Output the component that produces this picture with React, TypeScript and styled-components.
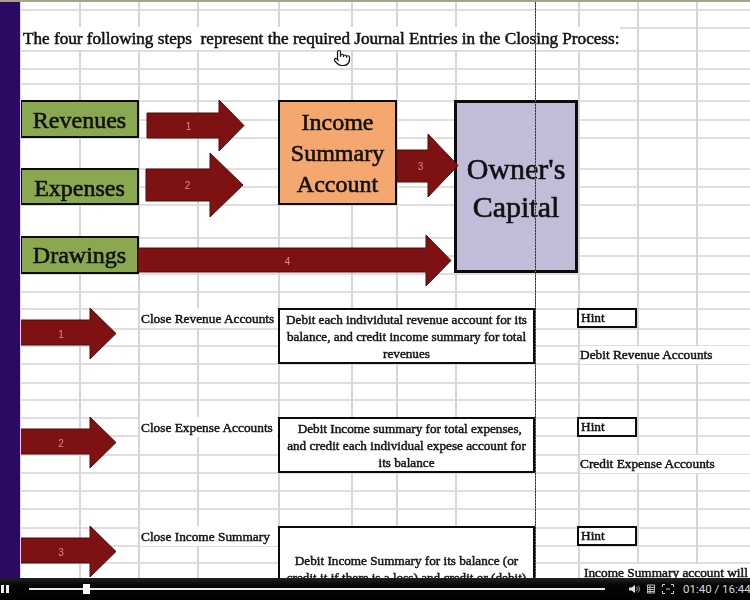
import React from 'react';
import styled, { createGlobalStyle } from 'styled-components';
import { Pointer } from 'lucide-react';

const COLUMNS = [59, 118, 177, 258, 331, 376, 435, 558, 617, 676];
const ROWS = [7, 25, 48, 66, 81, 98, 117, 135, 166, 184, 202, 235, 253, 271, 289, 306, 326, 343, 361, 380, 397, 415, 433, 452, 470, 488, 506, 525, 543, 560];

const gridLines = [
  ...COLUMNS.map((x) => `linear-gradient(#d6d6d6, #d6d6d6) ${x}px 0 / 2px 100% no-repeat`),
  ...ROWS.map((y) => `linear-gradient(#dfdfdf, #dfdfdf) 0 ${y}px / 100% 2px no-repeat`),
].join(', ');

const GlobalStyle = createGlobalStyle`
  html, body {
    margin: 0;
    padding: 0;
    background: #000;
  }
`;

const Frame = styled.div`
  width: 750px;
  height: 600px;
  display: flex;
  flex-direction: column;
  overflow: hidden;
  font-family: 'Liberation Serif', serif;
  color: #111;
`;

const Screen = styled.div`
  flex: 1;
  min-height: 0;
  display: flex;
  border-top: 2px solid #a8a48c;
`;

const Sidebar = styled.div`
  position: relative;
  z-index: 1;
  width: 20px;
  flex: none;
  background: #2a0a62;
  box-shadow: 1px 0 0 #ecd2f2;
`;

const Sheet = styled.div`
  flex: 1;
  position: relative;
  overflow: hidden;
  background: ${gridLines}, #fff;
`;

const Title = styled.div`
  margin: 25px 130px 0 0;
  height: 23px;
  padding-left: 3px;
  background: #fff;
  font-size: 17.15px;
  line-height: 24px;
  white-space: pre;
  -webkit-text-stroke: 0.5px #111;
  filter: blur(0.3px);
`;

const Diagram = styled.div`
  position: relative;
  height: 208px;
  margin-top: 50px;
`;

const Node = styled.div<{ $x: number; $y: number; $w: number; $h: number; $bg: string; $size: number; $line: number; $border: number; $lift: number }>`
  position: absolute;
  left: ${(p) => p.$x}px;
  top: ${(p) => p.$y}px;
  width: ${(p) => p.$w}px;
  height: ${(p) => p.$h}px;
  box-sizing: border-box;
  padding-top: ${(p) => p.$lift}px;
  display: flex;
  align-items: center;
  justify-content: center;
  text-align: center;
  background: ${(p) => p.$bg};
  border: ${(p) => p.$border}px solid #0c0c0c;
  font-size: ${(p) => p.$size}px;
  line-height: ${(p) => p.$line}px;
  -webkit-text-stroke: 0.6px #111;
  filter: blur(0.3px);
`;

const ArrowSvg = styled.svg<{ $x: number; $y: number }>`
  position: absolute;
  left: ${(p) => p.$x}px;
  top: ${(p) => p.$y}px;
  overflow: visible;
  filter: blur(0.3px);
`;

const Steps = styled.div`
  display: flex;
  flex-direction: column;
`;

const StepRow = styled.div`
  height: 109px;
  flex: none;
  display: grid;
  grid-template-columns: 120px 138px 257px 42px 1fr;
  align-items: start;
`;

const ArrowCell = styled.div`
  position: relative;
  height: 51px;
`;

const StepName = styled.div`
  padding: 3px 0 0 1px;
  height: 17px;
  margin-right: 1px;
  background: #fff;
  font-size: 13.33px;
  line-height: 15px;
  -webkit-text-stroke: 0.45px #111;
  white-space: nowrap;
  filter: blur(0.3px);
`;

const StepBox = styled.div<{ $h: number; $pad: number }>`
  height: ${(p) => p.$h}px;
  box-sizing: border-box;
  padding: ${(p) => p.$pad}px 0 0;
  background: #fff;
  border: 2px solid #0c0c0c;
  text-align: center;
  font-size: 13.2px;
  line-height: 17px;
  -webkit-text-stroke: 0.45px #111;
  white-space: nowrap;
  filter: blur(0.3px);
`;

const HintCell = styled.div`
  display: flex;
  flex-direction: column;
  align-items: flex-start;
`;

const HintBox = styled.div`
  width: 60px;
  height: 20px;
  box-sizing: border-box;
  padding-left: 2px;
  background: #fff;
  border: 2px solid #0c0c0c;
  font-size: 13.33px;
  line-height: 15px;
  -webkit-text-stroke: 0.45px #111;
  filter: blur(0.3px);
`;

const HintResult = styled.div<{ $indent: number }>`
  margin: 18px 0 0 ${(p) => p.$indent}px;
  background: #fff;
  padding-right: 37px;
  font-size: 13.33px;
  line-height: 18px;
  -webkit-text-stroke: 0.45px #111;
  white-space: nowrap;
  filter: blur(0.3px);
`;

const Guide = styled.div`
  position: absolute;
  left: 515px;
  top: 0;
  bottom: 0;
  width: 1px;
  background: repeating-linear-gradient(#333 0 2px, #888 2px 3px);
`;

const HandCursor = styled(Pointer)`
  position: absolute;
  left: 313px;
  top: 47px;
  fill: #fff;
  color: #111;
`;

const Player = styled.div`
  height: 22px;
  flex: none;
  display: flex;
  align-items: center;
  background: linear-gradient(#222 0, #060606 7px, #000 100%);
  color: #d8d8d8;
`;

const PauseButton = styled.div`
  width: 29px;
  flex: none;
  display: flex;
  gap: 2px;
  padding-left: 1px;
  box-sizing: border-box;
`;

const PauseBar = styled.span`
  width: 3px;
  height: 8px;
  background: #eee;
`;

const Track = styled.div`
  position: relative;
  width: 576px;
  height: 2px;
  flex: none;
  background: #e8e8e8;
`;

const Thumb = styled.div`
  position: absolute;
  left: 54px;
  top: -4px;
  width: 7px;
  height: 10px;
  background: #fff;
`;

const Controls = styled.div`
  margin-left: 24px;
  display: flex;
  align-items: center;
  gap: 6px;
`;

const TimeLabel = styled.span`
  margin-left: 3px;
  font-family: 'Roboto', 'Liberation Sans', sans-serif;
  font-size: 11.5px;
  white-space: nowrap;
`;

interface ArrowProps {
  x?: number;
  y?: number;
  width: number;
  height: number;
  shaftTop: number;
  shaftBottom: number;
  headX: number;
  label: string;
}

const Arrow: React.FC<ArrowProps> = ({ x = 0, y = 0, width, height, shaftTop, shaftBottom, headX, label }) => {
  const points = [
    [0, shaftTop],
    [headX, shaftTop],
    [headX, 0],
    [width, height / 2],
    [headX, height],
    [headX, shaftBottom],
    [0, shaftBottom],
  ]
    .map((p) => p.join(','))
    .join(' ');

  return (
    <ArrowSvg $x={x} $y={y} width={width} height={height} viewBox={`0 0 ${width} ${height}`}>
      <polygon points={points} fill="#7e1212" stroke="#4e0c0c" strokeWidth="1" />
      <text
        x={width / 2 - 7}
        y={height / 2 + 4}
        textAnchor="middle"
        fontFamily="'Liberation Sans', sans-serif"
        fontSize="10"
        fill="#ee8080"
      >
        {label}
      </text>
    </ArrowSvg>
  );
};

const steps = [
  {
    name: 'Close Revenue Accounts',
    boxHeight: 56,
    boxPad: 1,
    lines: ['Debit each individutal revenue account for its', 'balance, and credit income summary for total', 'revenues'],
    hint: 'Debit Revenue Accounts',
    indent: 3,
  },
  {
    name: 'Close Expense Accounts',
    boxHeight: 56,
    boxPad: 1,
    lines: ['\u00a0\u00a0Debit Income summary for total expenses,', 'and credit each individual expese account for', 'its balance'],
    hint: 'Credit Expense Accounts',
    indent: 3,
  },
  {
    name: 'Close Income Summary',
    boxHeight: 70,
    boxPad: 24,
    lines: ['Debit Income Summary for its balance (or', 'credit it if there is a loss) and credit or (debit)'],
    hint: 'Income Summary account will',
    indent: 7,
  },
];

const App: React.FC = () => {
  return (
    <Frame>
      <GlobalStyle />
      <Screen>
        <Sidebar />
        <Sheet>
          <Title>The four following steps  represent the required Journal Entries in the Closing Process:</Title>

          <Diagram>
            <Node $x={0} $y={0} $w={119} $h={38} $bg="#8aa84f" $size={24} $line={30} $border={2} $lift={1}>Revenues</Node>
            <Node $x={0} $y={68} $w={119} $h={37} $bg="#8aa84f" $size={24} $line={30} $border={2} $lift={3}>Expenses</Node>
            <Node $x={0} $y={136} $w={119} $h={38} $bg="#8aa84f" $size={24} $line={30} $border={2} $lift={0}>Drawings</Node>
            <Node $x={258} $y={0} $w={119} $h={105} $bg="#f4a76f" $size={24} $line={31} $border={2} $lift={2}>
              Income
              <br />
              Summary
              <br />
              Account
            </Node>
            <Node $x={434} $y={0} $w={124} $h={173} $bg="#c2bcd9" $size={30} $line={38} $border={3} $lift={3}>
              Owner's
              <br />
              Capital
            </Node>
            <Arrow x={127} y={0} width={97} height={51} shaftTop={13} shaftBottom={38} headX={72} label="1" />
            <Arrow x={126} y={53} width={97} height={64} shaftTop={16} shaftBottom={48} headX={64} label="2" />
            <Arrow x={377} y={34} width={61} height={63} shaftTop={16} shaftBottom={48} headX={31} label="3" />
            <Arrow x={118} y={135} width={313} height={51} shaftTop={13} shaftBottom={37} headX={288} label="4" />
          </Diagram>

          <Steps>
            {steps.map((step, i) => (
              <StepRow key={step.name}>
                <ArrowCell>
                  <Arrow width={96} height={51} shaftTop={12} shaftBottom={37} headX={70} label={String(i + 1)} />
                </ArrowCell>
                <StepName>{step.name}</StepName>
                <StepBox $h={step.boxHeight} $pad={step.boxPad}>
                  {step.lines.map((line) => (
                    <div key={line}>{line}</div>
                  ))}
                </StepBox>
                <div />
                <HintCell>
                  <HintBox>Hint</HintBox>
                  <HintResult $indent={step.indent}>{step.hint}</HintResult>
                </HintCell>
              </StepRow>
            ))}
          </Steps>

          <Guide />
          <HandCursor size={18} strokeWidth={1.6} />
        </Sheet>
      </Screen>

      <Player>
        <PauseButton>
          <PauseBar />
          <PauseBar />
        </PauseButton>
        <Track>
          <Thumb />
        </Track>
        <Controls>
          <svg width="11" height="10" viewBox="0 0 11 10">
            <path d="M0 3.5h2.5L6 1v8L2.5 6.5H0z" fill="#ddd" />
            <path d="M7.5 3a3 3 0 0 1 0 4M9 1.5a5 5 0 0 1 0 7" stroke="#999" fill="none" />
          </svg>
          <svg width="10" height="10" viewBox="0 0 10 10">
            <path d="M1.5 1h7v8h-7zM1.5 3.5h7M1.5 5.5h7M1.5 7.5h7M4 1v8" stroke="#bbb" fill="none" />
          </svg>
          <svg width="12" height="10" viewBox="0 0 12 10">
            <path d="M.5 3V.5H3M9 .5h2.5V3M.5 7v2.5H3M9 9.5h2.5V7M4 5h4" stroke="#ccc" fill="none" />
          </svg>
          <TimeLabel>01:40 / 16:44</TimeLabel>
        </Controls>
      </Player>
    </Frame>
  );
};

export default App;
